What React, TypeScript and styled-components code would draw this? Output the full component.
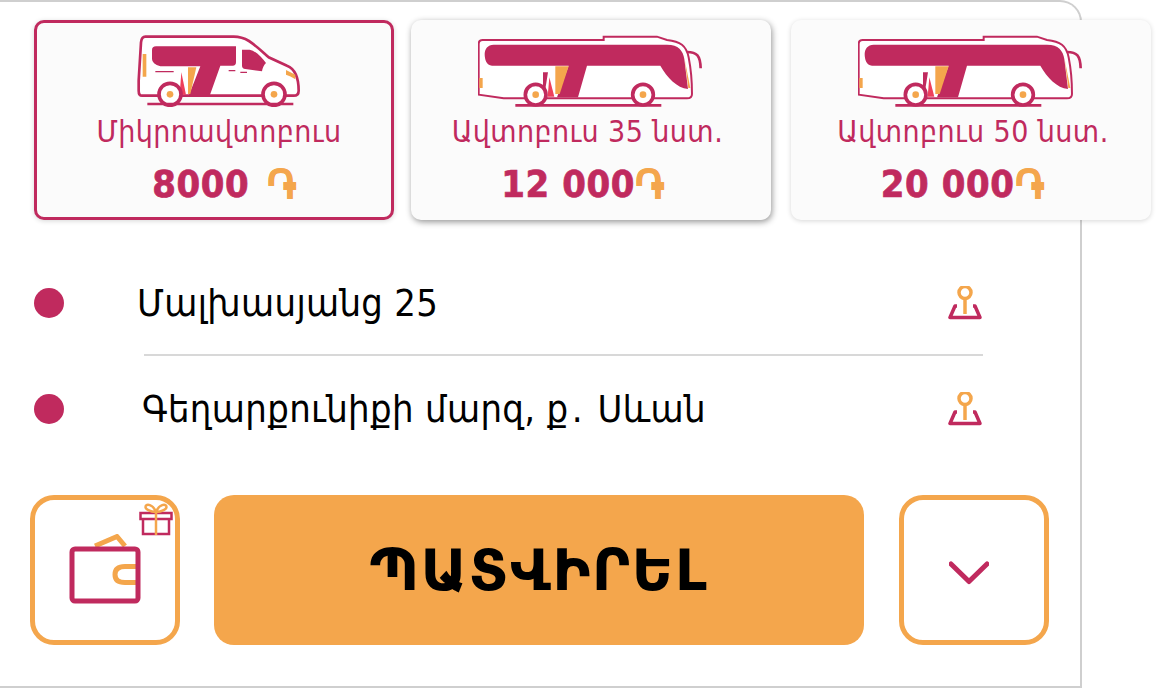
import React from 'react'
import styled, { createGlobalStyle } from 'styled-components'

const pink = '#c02a5e'
const orange = '#f4a64c'

const GlobalStyle = createGlobalStyle`
  html, body {
    margin: 0;
    padding: 0;
    background: #fff;
    overflow: hidden;
  }
  body {
    font-family: "DejaVu Sans Condensed", "DejaVu Sans", sans-serif;
    font-stretch: condensed;
  }
`

const Panel = styled.div`
  box-sizing: border-box;
  width: 1082px;
  height: 688px;
  padding: 18px 0 0 30px;
  background: #fff;
  border: 2px solid #cfcfcf;
  border-left: none;
  border-top-right-radius: 22px;
`

const CarRow = styled.div`
  display: flex;
  gap: 17px;
  width: 1122px;
  margin: 0 0 30px 4px;
`

const Card = styled.div<{ $active?: boolean; $raised?: boolean }>`
  box-sizing: border-box;
  flex: 0 0 360px;
  height: 200px;
  padding-top: ${p => (p.$active ? 11 : 14)}px;
  display: flex;
  flex-direction: column;
  align-items: center;
  background: #fbfbfb;
  border: ${p => (p.$active ? `3px solid ${pink}` : 'none')};
  border-radius: 10px;
  box-shadow: ${p =>
    p.$raised ? '1px 2px 6px rgba(0, 0, 0, 0.42)' : '0 1px 5px rgba(0, 0, 0, 0.16)'};
  &:nth-child(3) {
    margin-left: 3px;
  }
`

const VanArt = styled.svg`
  margin-left: 10px;
`

const CarName = styled.div<{ $shift: number }>`
  margin: 5px 0 0 ${p => p.$shift}px;
  font-size: 30px;
  line-height: 40px;
  letter-spacing: 0.4px;
  color: ${pink};
  white-space: nowrap;
`

const Price = styled.div<{ $shift: number }>`
  display: flex;
  align-items: center;
  height: 40px;
  margin: 12px 0 0 ${p => p.$shift}px;
  font-size: 37.8px;
  font-weight: 700;
  letter-spacing: 0.6px;
  -webkit-text-stroke: 0.7px ${pink};
  color: ${pink};
  white-space: nowrap;
`

const Dram = styled.span<{ $spaced?: boolean }>`
  margin-left: ${p => (p.$spaced ? 18 : 0)}px;
  font-size: 40px;
  -webkit-text-stroke: 0.6px ${orange};
  color: ${orange};
`

const AddressRow = styled.div`
  box-sizing: border-box;
  display: flex;
  align-items: center;
  width: 952px;
  height: 105px;
  padding-left: 4px;
`

const Dot = styled.span`
  flex: none;
  width: 30px;
  height: 30px;
  border-radius: 50%;
  background: ${pink};
`

const Address = styled.div<{ $indent: number }>`
  flex: 1;
  margin-left: ${p => p.$indent}px;
  font-size: 37.8px;
  letter-spacing: 0.35px;
  color: #000;
  white-space: nowrap;
`

const MiddlePoint = styled.span`
  margin: 0 3px;
`

const Divider = styled.div`
  width: 839px;
  height: 2px;
  margin: -1px 0 0 114px;
  background: #d8d8d8;
`

const Actions = styled.div`
  display: flex;
  margin-top: 34px;
`

const SquareButton = styled.button`
  position: relative;
  box-sizing: border-box;
  flex: none;
  display: flex;
  align-items: center;
  justify-content: center;
  width: 150px;
  height: 150px;
  padding: 0;
  background: #fff;
  border: 5px solid ${orange};
  border-radius: 24px;
`

const ConfirmButton = styled.button`
  flex: none;
  width: 650px;
  height: 150px;
  margin: 0 35px 0 34px;
  padding: 0;
  background: ${orange};
  border: none;
  border-radius: 20px;
  font-family: "DejaVu Sans", sans-serif;
  font-size: 57px;
  font-weight: 700;
  letter-spacing: 1.700px;
  color: #000;
`

const GiftBadge = styled.svg`
  position: absolute;
  top: 3px;
  right: 2px;
`

const ChevronArt = styled.svg`
  margin: 6px 10px 0 0;
`

const Van = () => (
  <VanArt width="165" height="73.33" viewBox="350 100 495 220">
    <path d="M375 108H640C680 108 700 130 745 170L800 195C825 205 835 230 835 270Q835 285 820 285H365Q355 285 355 270V240L362 125Q364 108 375 108Z" fill="#fff" stroke={pink} strokeWidth="8" />
    <path d="M407 137H647V185Q647 195 637 195H600L568 285H505L540 197H420Q395 190 395 175V148Q395 137 407 137Z" fill={pink} />
    <path d="M665 147H688C705 150 725 170 737 187Q728 195 725 212L675 205Q665 204 665 195Z" fill={pink} />
    <path d="M367 160H378V228H367ZM797 208L825 222V236Q810 225 797 222Z" fill={orange} />
    <path d="M503 200H528L510 280H503Z" fill={orange} />
    <path d="M483 215L497 282H478Z" fill="#ee3f5c" />
    <path d="M405 213H460M625 210H645M660 215H680" stroke={pink} strokeWidth="4" />
    <circle cx="449" cy="281" r="33" fill="#fff" stroke={pink} strokeWidth="11" />
    <circle cx="449" cy="281" r="10" fill={orange} />
    <circle cx="761" cy="281" r="33" fill="#fff" stroke={pink} strokeWidth="11" />
    <circle cx="761" cy="281" r="10" fill={orange} />
    <path d="M381 310H819" stroke={pink} strokeWidth="8" />
  </VanArt>
)

const Bus = () => (
  <svg width="226.67" height="73.33" viewBox="233 100 680 220">
    <path d="M610 118V108H770L800 118C840 122 858 135 865 170C875 220 875 260 875 280Q875 293 860 293H310L235 282V130Q235 118 247 118Z" fill="#fff" stroke={pink} strokeWidth="6" />
    <path d="M280 132H800C835 132 848 150 852 175L863 265C830 262 800 230 780 195H560L533 290H470L505 195H275C258 195 253 175 253 160C253 145 262 132 280 132Z" fill={pink} />
    <path d="M848 150L870 262H864L853 175Z" fill={orange} />
    <path d="M860 154C890 154 900 165 901 203" fill="none" stroke={pink} strokeWidth="8" />
    <path d="M237 232H247V262H237Z" fill={orange} />
    <path d="M465 197H505L478 280H465Z" fill={orange} />
    <path d="M447 230L462 288H442Z" fill="#ee3f5c" />
    <path d="M428 215H443L435 265H428Z" fill={pink} />
    <circle cx="406" cy="282" r="31" fill="#fff" stroke={pink} strokeWidth="11" />
    <circle cx="406" cy="282" r="10" fill={orange} />
    <circle cx="728" cy="282" r="31" fill="#fff" stroke={pink} strokeWidth="11" />
    <circle cx="728" cy="282" r="10" fill={orange} />
    <path d="M345 314H783" stroke={pink} strokeWidth="8" />
  </svg>
)

const PinIcon = () => (
  <svg width="34" height="34" viewBox="0 0 34 34" fill="none" strokeWidth="3.500">
    <circle cx="17" cy="6.500" r="6" stroke={orange} />
    <path d="M17 13V28" stroke={orange} />
    <path d="M9 20H7L2 31.500H32L27 20H25" stroke={pink} strokeLinejoin="round" />
  </svg>
)

const WalletIcon = () => (
  <svg width="72" height="72" viewBox="0 0 72 72" fill="none" strokeWidth="5">
    <path d="M26 12L48 2.500L56 12" stroke={orange} strokeLinejoin="round" />
    <path d="M70 32.500H56Q46 32.500 46 40.500Q46 48.500 56 48.500H70" stroke={orange} />
    <rect x="3" y="15" width="66" height="52" rx="3" stroke={pink} />
  </svg>
)

const GiftIcon = () => (
  <GiftBadge width="34" height="34" viewBox="0 0 34 34" fill="none" strokeWidth="2.500">
    <path d="M1.500 10H32.500V16H1.500ZM4 16H30V31H4Z" stroke={pink} />
    <path d="M17 9V32" stroke={orange} />
    <path d="M17 9C11 9 6 6 6.500 3.500C7 0.500 14 1 17 9C20 1 27 0.500 27.500 3.500C28 6 23 9 17 9Z" stroke={orange} />
  </GiftBadge>
)

const ChevronIcon = () => (
  <ChevronArt width="40" height="24" viewBox="0 0 40 24" fill="none">
    <path d="M2 3L20 20.500L38 3" stroke={pink} strokeWidth="5" strokeLinecap="round" strokeLinejoin="round" />
  </ChevronArt>
)

const cars = [
  { name: 'Միկրոավտոբուս', price: '8000', Icon: Van, active: true, spaced: true, nameShift: 10, priceShift: 21 },
  { name: 'Ավտոբուս 35 նստ․', price: '12 000', Icon: Bus, raised: true, nameShift: -7, priceShift: -16 },
  { name: 'Ավտոբուս 50 նստ․', price: '20 000', Icon: Bus, nameShift: 4, priceShift: -17 },
]

const App = () => {
  return (
    <Panel>
      <GlobalStyle />
      <CarRow>
        {cars.map(({ name, price, Icon, active, raised, spaced, nameShift, priceShift }) => (
          <Card key={name} $active={active} $raised={raised}>
            <Icon />
            <CarName $shift={nameShift}>{name}</CarName>
            <Price $shift={priceShift}>
              {price}
              <Dram $spaced={spaced}>֏</Dram>
            </Price>
          </Card>
        ))}
      </CarRow>
      <AddressRow>
        <Dot />
        <Address $indent={73}>Մալխասյանց 25</Address>
        <PinIcon />
      </AddressRow>
      <Divider />
      <AddressRow>
        <Dot />
        <Address $indent={78}>Գեղարքունիքի մարզ, ք<MiddlePoint>․</MiddlePoint> Սևան</Address>
        <PinIcon />
      </AddressRow>
      <Actions>
        <SquareButton>
          <WalletIcon />
          <GiftIcon />
        </SquareButton>
        <ConfirmButton>ՊԱՏՎԻՐԵԼ</ConfirmButton>
        <SquareButton>
          <ChevronIcon />
        </SquareButton>
      </Actions>
    </Panel>
  )
}

export default App
